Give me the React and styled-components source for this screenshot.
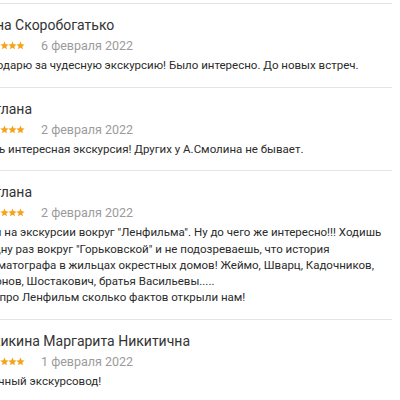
import React from "react";
import styled, { createGlobalStyle } from "styled-components";

const Global = createGlobalStyle`
  html, body { margin: 0; padding: 0; background: #fff; overflow: hidden; }
  body { font-family: Roboto, "Liberation Sans", sans-serif; }
`;

const Viewport = styled.div`
  width: 400px;
  height: 400px;
  overflow: hidden;
`;

const List = styled.div`
  margin-left: -28px;
  width: 420px;
  padding-top: 3px;
  display: flex;
  flex-direction: column;
`;

const Review = styled.div`
  border-top: 1px solid #e4e4e4;
  padding: 11px 0 13.5px 0;
  display: flex;
  flex-direction: column;
`;

const Name = styled.div`
  font-size: 14px;
  line-height: 20px;
  color: #333;
  margin-left: -2px;
`;

const Meta = styled.div`
  display: flex;
  align-items: center;
  gap: 17px;
  height: 21px;
`;

const Stars = styled.span`
  display: flex;
  align-items: center;
  gap: 0;
  margin-left: 12px;
`;

const Star = styled.svg`
  width: 9px;
  height: 9px;
  margin-right: -1px;
  display: block;
`;

const DateText = styled.span`
  font-size: 12.5px;
  color: #9b9b9b;
`;

const Text = styled.div`
  font-size: 11.5px;
  line-height: 16.2px;
  color: #2b2b2b;
  margin-top: 1px;
  padding-right: 4px;
  white-space: pre-line;
`;

const reviews = [
  {
    name: "Ирина Скоробогатько",
    date: "6 февраля 2022",
    text: "Благодарю за чудесную экскурсию! Было интересно. До новых встреч.",
  },
  {
    name: "Светлана",
    date: "2 февраля 2022",
    text: "Очень интересная экскурсия! Других у А.Смолина не бывает.",
  },
  {
    name: "Светлана",
    date: "2 февраля 2022",
    text:
      "Были на экскурсии вокруг \"Ленфильма\". Ну до чего же интересно!!! Ходишь не одну раз вокруг \"Горьковской\" и не подозреваешь, что история кинематографа в жильцах окрестных домов! Жеймо, Шварц, Кадочников, Миронов, Шостакович, братья Васильевы.....\nА уж про Ленфильм сколько фактов открыли нам!",
  },
  {
    name: "Рыжикина Маргарита Никитична",
    date: "1 февраля 2022",
    text: "Отличный экскурсовод!",
  },
];

function StarIcon() {
  return (
    <Star viewBox="0 0 24 24">
      <path
        fill="#f5a31a"
        d="M12 1.5l3.1 7.1 7.7.7-5.8 5.1 1.7 7.6L12 18l-6.7 4 1.7-7.6L1.2 9.3l7.7-.7z"
      />
    </Star>
  );
}

export default function App() {
  return (
    <Viewport>
      <Global />
      <List>
        {reviews.map((r, i) => (
          <Review key={i}>
            <Name>{r.name}</Name>
            <Meta>
              <Stars>
                {[0, 1, 2, 3, 4].map((k) => (
                  <StarIcon key={k} />
                ))}
              </Stars>
              <DateText>{r.date}</DateText>
            </Meta>
            <Text>{r.text}</Text>
          </Review>
        ))}
      </List>
    </Viewport>
  );
}
